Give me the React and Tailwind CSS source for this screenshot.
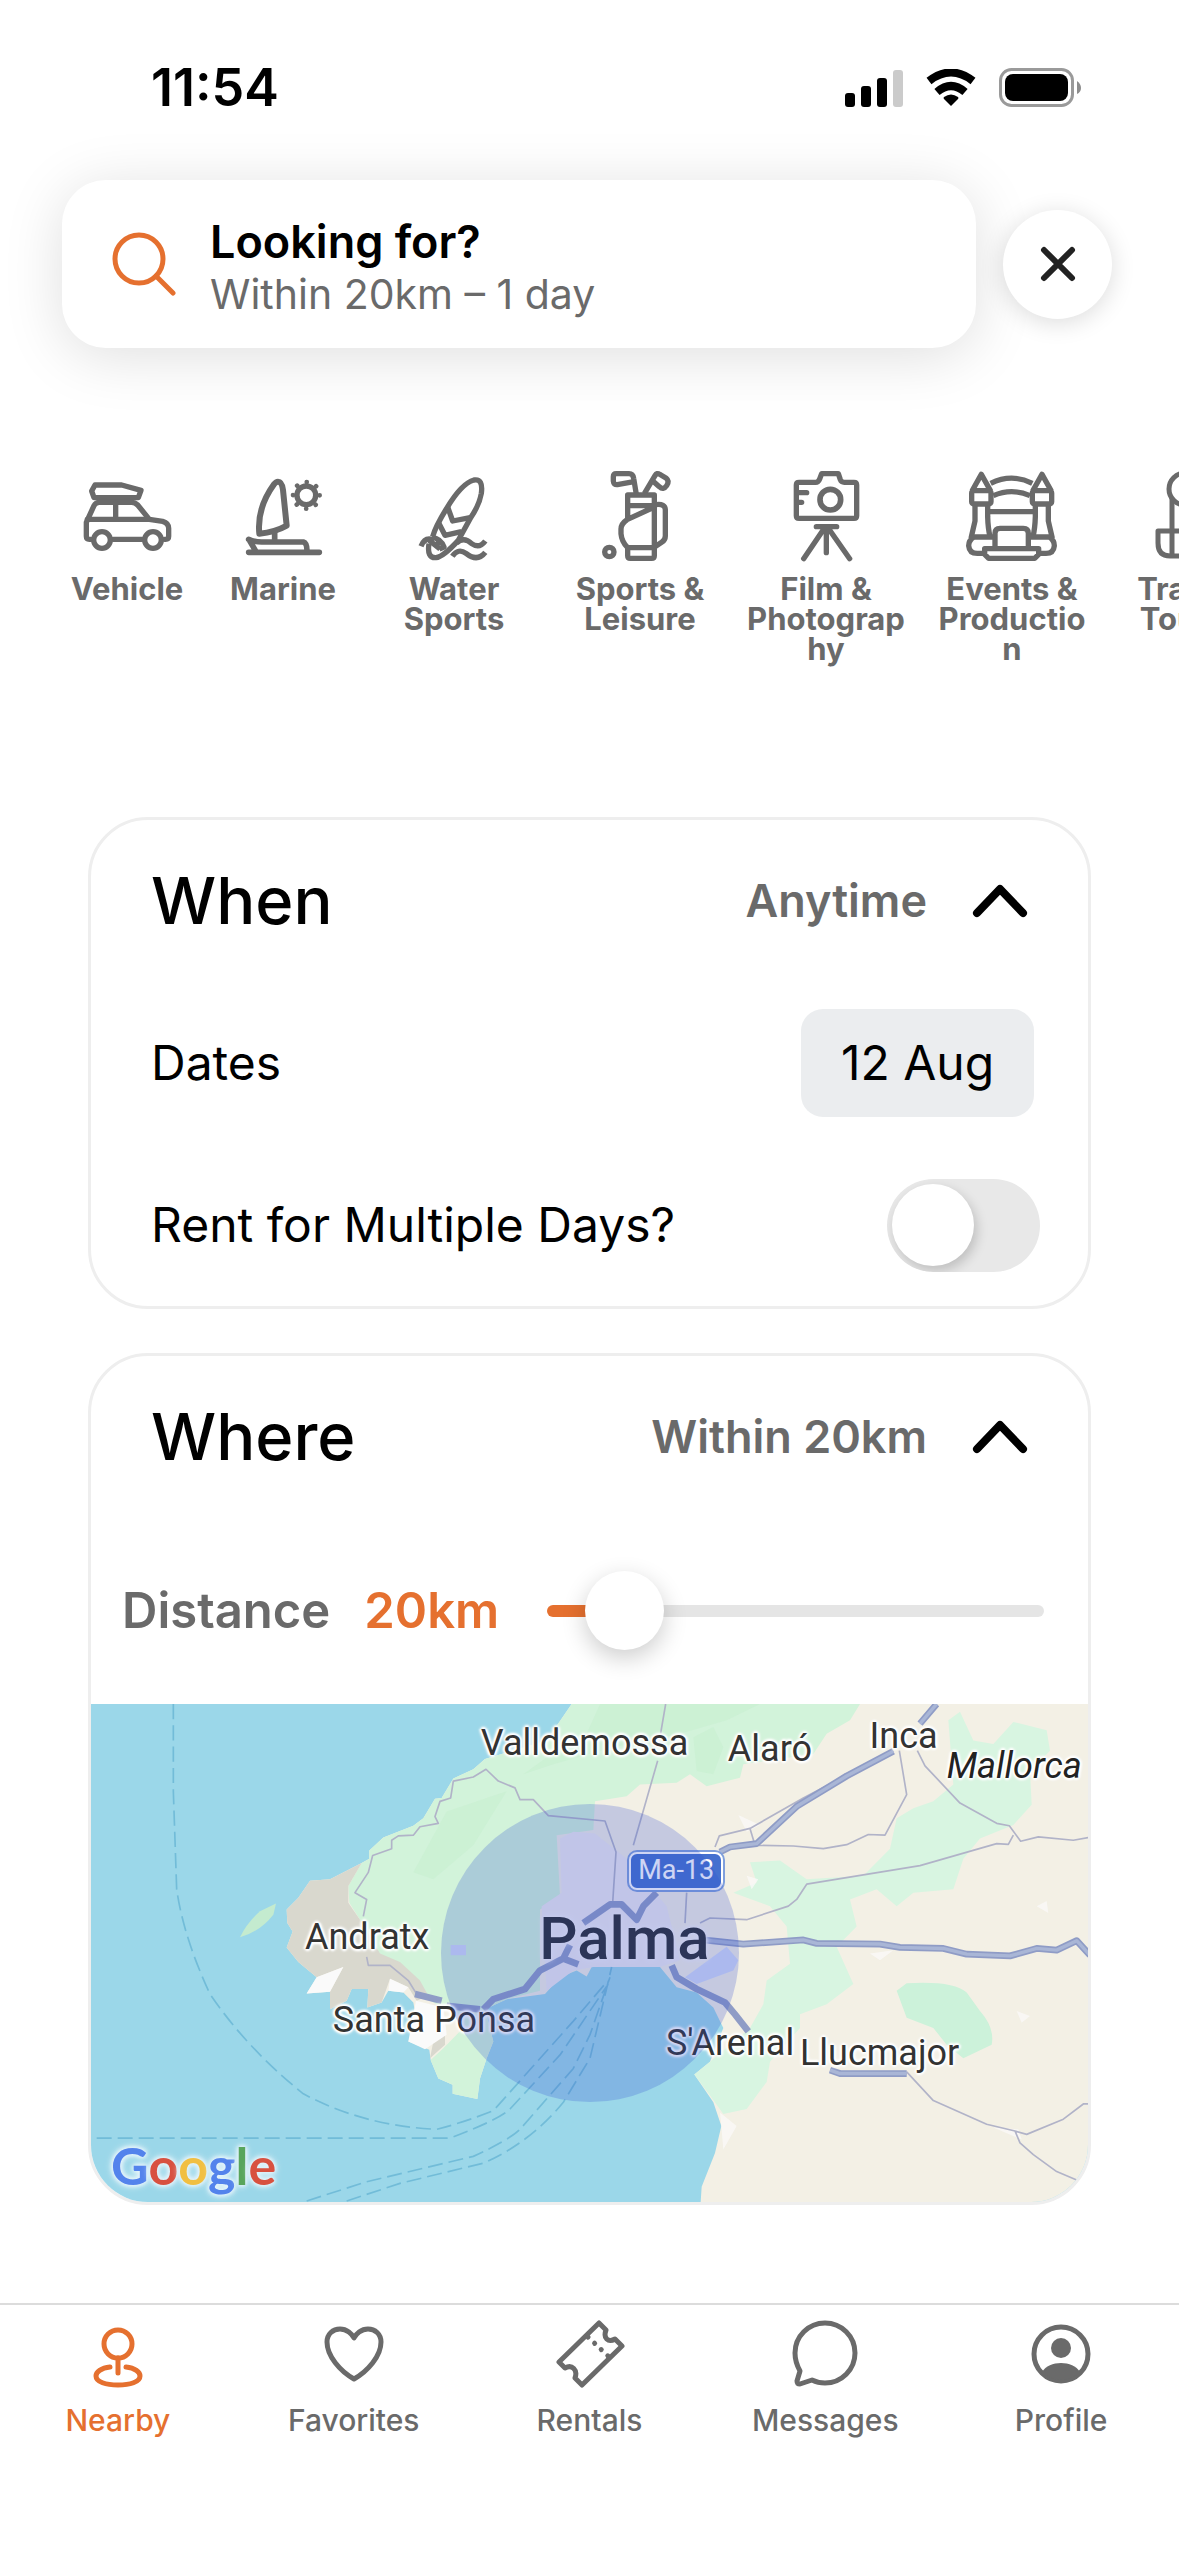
import React, { useState } from 'react';

const VehicleIcon = () => (
  <svg viewBox="27 15 288 288" className="size-24" fill="none" stroke="currentColor" strokeWidth="16" strokeLinecap="round" strokeLinejoin="round">
    <path d="M72 98 65 78 75 60H155L213 76 205 98Z" />
    <path d="M103 100v10M172 100v10" strokeLinecap="butt" />
    <path d="M62 223H58Q49 223 49 214V172L72 122Q77 112 88 112H185Q195 112 203 120L238 163 278 169Q296 174 296 190V214Q296 223 287 223H284" />
    <path d="M52 163H238M137 114V160M130 223H216" />
    <circle cx="96" cy="225" r="25" />
    <circle cx="249" cy="225" r="25" />
  </svg>
);

const MarineIcon = () => (
  <svg viewBox="495 15 288 288" className="size-24" fill="none" stroke="currentColor" strokeWidth="16" strokeLinecap="round" strokeLinejoin="round">
    <path d="M624 50Q636 50 639 75L650 182Q615 202 568 206 560 130 612 58 618 50 624 50Z" strokeWidth="18" />
    <path d="M614 200V228M536 223Q555 232 580 231H700Q711 234 711 258M537 224 558 260M536 262H748" strokeWidth="17" />
    <circle cx="709" cy="91" r="28" />
    <circle cx="709" cy="91" r="40" strokeWidth="14" strokeDasharray="0.1 31.316" />
  </svg>
);

const WaterIcon = () => (
  <svg viewBox="1008 15 288 288" className="size-24" fill="none" stroke="currentColor" strokeWidth="16" strokeLinejoin="round">
    <path d="M1165 226Q1120 275 1098 278 1070 280 1077 236M1088 215Q1096 185 1130 130 1175 55 1212 45 1240 40 1234 85 1228 120 1202 158L1165 226" />
    <path d="M1133 126 1148 168 1204 157M1105 172 1125 211 1174 200" />
    <path d="M1053 244Q1064 216 1088 224M1078 226 1110 252M1086 217Q1112 220 1122 246L1108 252M1096 232 1110 240" />
    <path d="M1160 234Q1182 214 1205 236 1228 252 1246 228M1147 274Q1165 248 1188 265 1222 292 1246 262" />
  </svg>
);

const SportsIcon = () => (
  <svg viewBox="-9 15 288 288" className="size-24" fill="none" stroke="currentColor" strokeWidth="16" strokeLinejoin="round">
    <path d="M124 88 116 40Q114 26 102 26H64Q55 26 55 35V48Q56 60 67 59L117 50" />
    <path d="M148 86 180 32Q186 22 194 28L214 40Q224 48 215 62 205 77 193 65L176 50" />
    <path d="M98 160V90H178V248M98 122H178M178 126 96 164Q78 176 78 192V206Q80 230 98 248H178V272Q178 280 170 280H106Q98 280 98 272V248" />
    <path d="M182 119Q211 115 211 135V213Q211 225 200 232L182 244" />
    <circle cx="43" cy="261" r="14" />
  </svg>
);

const FilmIcon = () => (
  <svg viewBox="549 15 288 288" className="size-24" fill="none" stroke="currentColor" strokeWidth="16" strokeLinecap="round" strokeLinejoin="round">
    <path d="M612 52H662Q670 52 674 42L680 26H730L736 44Q739 52 748 52H777Q785 52 785 60V152Q785 160 777 160H612Q604 160 604 152V60Q604 52 612 52Z" />
    <circle cx="706" cy="104" r="31" strokeWidth="17" />
    <path d="M606 83H635M606 112H620M664 185H725M694 190V263M688 190 626 281M700 190 764 281" />
  </svg>
);

const EventsIcon = () => (
  <svg viewBox="1110 15 288 288" className="size-24" fill="none" stroke="currentColor" strokeWidth="16" strokeLinejoin="round">
    <path d="M1134 78 1162 28 1190 78M1316 78 1344 28 1372 78" />
    <rect x="1133" y="77" width="58" height="40" rx="7" />
    <rect x="1315" y="77" width="58" height="40" rx="7" />
    <path d="M1143 120V168L1131 220M1181 120V155Q1182 190 1188 215M1363 120V168L1375 220M1324 120V155Q1323 190 1317 215" />
    <path d="M1198 216H1140Q1124 226 1124 242 1126 265 1150 265H1168M1308 216H1366Q1381 226 1381 242 1379 265 1356 265H1338" />
    <path d="M1190 55Q1253 24 1315 55M1198 92Q1253 68 1308 92M1188 140H1318" />
    <path d="M1203 248V205Q1203 190 1218 190H1288Q1303 190 1303 205V248" />
    <path d="M1172 251H1334V268L1322 280H1184L1172 268Z" />
  </svg>
);

const TravelIcon = () => (
  <svg viewBox="0 0 96 96" className="size-24" fill="none" stroke="currentColor" strokeWidth="5" strokeLinejoin="round">
    <circle cx="35" cy="19" r="16" />
    <path d="M22 28V86M48 28V86M22 61H8V73Q8 86 20 86H76Q88 86 88 73V61H48M22 61H48" />
  </svg>
);

const categories = [
  { label: 'Vehicle', Icon: VehicleIcon, width: 'w-[132px]' },
  { label: 'Marine', Icon: MarineIcon, width: 'w-[132px]' },
  { label: 'Water Sports', Icon: WaterIcon, width: 'w-[162px]' },
  { label: 'Sports & Leisure', Icon: SportsIcon, width: 'w-[162px]' },
  { label: 'Film & Photography', Icon: FilmIcon, width: 'w-[162px]' },
  { label: 'Events & Production', Icon: EventsIcon, width: 'w-[162px]' },
  { label: 'Travel & Touring', Icon: TravelIcon, width: 'w-[162px]' }
];

const tabs = [
  {
    label: 'Nearby',
    icon: (
      <>
        <circle cx="36" cy="26" r="14" />
        <path d="M36 40V55M28 49C19 50 14 54 14 58 14 64 24 67 36 67S58 64 58 58C58 54 53 50 44 49" />
      </>
    )
  },
  {
    label: 'Favorites',
    icon: <path d="M36 61C22 53 9 38 9 24 9 16 15 11 22 11 29 11 34 16 36 20 38 16 43 11 50 11 57 11 63 16 63 24 63 38 50 53 36 61Z" />
  },
  {
    label: 'Rentals',
    icon: (
      <>
        <path d="M46 5 53 12C50 20 55 25 62 21L69 28 29 67 22 60C25 52 19 46 12 50L6 44Z" />
        <path d="M35 19 55 38" strokeDasharray="0.1 9" />
      </>
    )
  },
  {
    label: 'Messages',
    icon: <path d="M36 65Q29 65 23 62L11 66Q8 66 8 63L11 53Q6 44 6 35A30 30 0 1 1 36 65Z" />
  },
  {
    label: 'Profile',
    icon: (
      <>
        <circle cx="36" cy="36" r="27" />
        <circle cx="36" cy="30" r="10" fill="currentColor" stroke="none" />
        <path d="M17 54C24 42 48 42 55 54A27 27 0 0 1 17 54Z" fill="currentColor" stroke="none" />
      </>
    )
  }
];

// positions are the label centres, in percent of the map
const places = [
  { name: 'Valldemossa', x: 49.5, y: 7.8 },
  { name: 'Alaró', x: 68.1, y: 9 },
  { name: 'Inca', x: 81.5, y: 6.4 },
  { name: 'Andratx', x: 27.7, y: 46.8 },
  { name: 'Santa Ponsa', x: 34.4, y: 63.5 },
  { name: "S'Arenal", x: 64.1, y: 68.1 },
  { name: 'Llucmajor', x: 79.1, y: 70.1 }
];

const halo = '[text-shadow:0_0_2px_#fff,2px_0_2px_#fff,-2px_0_2px_#fff,0_2px_2px_#fff,0_-2px_2px_#fff,0_0_4px_#fff,0_0_5px_#fff]';

const StatusBar = () => (
  <div className="flex h-[60px] items-center justify-between pr-[97px] pl-[151px]">
    <span className="text-[52px] font-semibold">11:54</span>
    <div className="flex items-center gap-[23px]">
      <svg viewBox="0 0 58 38" className="h-[38px] w-[58px]">
        <rect x="0" y="24" width="10" height="14" rx="3" />
        <rect x="16" y="17" width="10" height="21" rx="3" />
        <rect x="32" y="9" width="10" height="29" rx="3" />
        <rect x="48" y="1" width="10" height="37" rx="3" fill="#cbcbcb" />
      </svg>
      <svg viewBox="0 0 50 38" className="h-[38px] w-[50px]">
        <path d="M25 37 18 30Q17 29 18 28Q25 23 32 28Q33 29 32 30Z" />
        <path d="M11 23Q25 11 39 23" fill="none" stroke="#000" strokeWidth="8" />
        <path d="M3 12Q25 -5 47 12" fill="none" stroke="#000" strokeWidth="8" />
      </svg>
      <svg viewBox="0 0 83 40" className="h-10 w-[83px]">
        <rect x="1.5" y="1.5" width="72" height="36" rx="11" fill="none" stroke="#9a9a9a" strokeWidth="3" />
        <rect x="6" y="6" width="63" height="27" rx="8" />
        <path d="M78 13Q82 16 82 20T78 26Z" fill="#8d8d8d" />
      </svg>
    </div>
  </div>
);

const CardHeader = ({ title, value }) => (
  <button type="button" className="flex h-[162px] w-full items-center pr-[58px] pl-[60px] text-left">
    <h2 className="flex-1 text-[65px] font-medium">{title}</h2>
    <span className="text-[45px] font-semibold text-[#6a6a6a]">{value}</span>
    <svg viewBox="0 0 60 40" className="ml-[43px] h-10 w-[60px]" fill="none" stroke="#000" strokeWidth="8" strokeLinecap="round" strokeLinejoin="round">
      <path d="M7 32 30 8 53 32" />
    </svg>
  </button>
);

const RadiusMap = () => (
  <div className="relative h-[498px] overflow-hidden bg-[#9bd7e9] font-['Roboto',sans-serif]">
    <svg viewBox="33 42 2991 1473" preserveAspectRatio="none" className="h-full w-full" fill="none" strokeLinejoin="round">
      <path fill="#f3f0e5" d="M1475 42 1400 150 1215 205 1180 235 1120 262 1085 320 1065 322 1030 380 1000 402 910 437 868 475V500L845 512 750 560 690 565 655 615 620 650 622 690 638 715 620 762 655 805 710 850 680 898 750 893V945L800 920 815 885H865L862 940 905 925 925 890 970 895 1000 925 1010 980 985 1040 1048 1065 1052 1095 1075 1150 1118 1168V1195L1192 1210 1200 1150 1220 1090 1240 1040 1215 945 1280 915 1395 900 1440 850 1490 830 1520 848 1535 820 1680 808 1740 820 1790 880 1850 895 1900 940 1930 1000 1890 1100 1843 1138 1900 1220 1924 1290 1905 1370 1865 1470 1862 1515H3030V42Z" />
      {/* mountains */}
      <path fill="#d2f3da" d="M1475 42 1400 150 1215 205 1180 235 1120 262 1085 320 1065 322 1030 380 1000 402 910 437 868 475V500L845 512 805 580 808 630 840 680 900 790 960 810 1010 860 1050 920 1130 960 1140 1010 1090 1060 1052 1095 1075 1150 1118 1168V1195L1192 1210 1200 1150 1220 1090 1240 1040 1215 945 1280 915 1380 890 1380 650 1440 610 1430 430 1540 415 1545 330 1640 315 1680 280 1790 275 1830 250 1880 285 1980 260 1990 220 2200 190 2240 130 2310 90 2340 42Z" />
      <path fill="#c9efd2" d="M1560 42 1520 130 1400 200 1330 250 1420 220 1600 170 1800 130 1940 90 2040 42ZM1840 140 1900 110 1930 170 1900 250 1850 240ZM1100 360 1280 300 1180 460 1060 560 1000 540Z" opacity=".7" />
      <path fill="#d9d8ce" d="M845 512 750 560 690 565 655 615 620 650 622 690 638 715 620 762 655 805 710 850 790 820 750 893V945L800 920 815 885H865L862 940 905 925 930 855 985 880 1010 920 1045 905 1020 860 960 805 900 780 840 680 805 630V580ZM1050 1090 1095 1050V1020L1060 1040Z" />
      <path fill="#fafafa" d="M710 850 790 820 750 893 680 898ZM930 855 985 880 970 895 925 890ZM1008 920 1090 940 1100 1020 1035 1063 985 1040Z" />
      <path fill="#c4ebcf" d="M480 732Q500 690 540 655L588 632 580 665Q540 715 480 732Z" />
      <path fill="#d8f5e1" d="M2605 90 2640 65 2680 150 2740 160 2800 95 2900 120 2910 180 2850 240 2855 340 2800 400 2700 440 2650 500 2620 590 2500 600 2450 640 2390 590 2310 620 2330 700 2270 760 2320 870 2240 930 2160 960V1000L2070 1100 2060 1160 2000 1240 1930 1255 1890 1200 1843 1138 1890 1100 2010 1000 2050 930 2060 860 2130 810 2120 700 2070 640 1960 600 2030 570 2010 510 2100 505 2180 560 2350 550 2430 470 2450 380 2500 350 2560 330 2620 280Z" />
      <path fill="#ccf2da" d="M2450 890 2480 868Q2620 860 2660 895L2700 950Q2745 1000 2735 1050L2650 1090 2600 1050 2560 1000 2480 970Z" />
      {/* city */}
      <path fill="#eeeaf0" d="M1440 440 1480 420 1545 425 1640 500 1760 640 1800 800 1740 820 1540 820 1480 830 1400 890 1385 640 1445 600Z" />
      <path fill="#d3dbf8" d="M1815 850 1940 760 1975 800 1960 830 1850 870ZM1112 755H1158V785H1112Z" />
      <path fill="#faf9f8" d="M1975 370 2040 400 2000 420ZM2000 550 2035 560 2015 590ZM2870 640 2900 625 2905 660ZM2370 780 2440 770 2400 800ZM2810 950 2850 965 2825 985ZM1920 1250 1970 1290 1930 1360ZM2740 1295 2815 1300 2825 1330Z" opacity=".8" />
      {/* ferry lines */}
      <path stroke="#72bcd8" strokeWidth="5" strokeDasharray="45 18" d="M280 42V300L290 590Q310 730 390 900 500 1060 670 1195 850 1290 1070 1300 1150 1280 1240 1245L1480 980 1575 870M50 1326H1110Q1260 1270 1290 1240L1440 1080 1585 870M680 1512 860 1455 1180 1380Q1290 1330 1320 1300L1480 1120 1530 1020 1590 850M800 1512 960 1460 1210 1400Q1350 1340 1450 1220L1530 1090 1595 820" />
      {/* roads */}
      <path stroke="#b1b3c8" strokeWidth="5" d="M850 670 860 620 825 600 865 540 878 490 935 470V445L955 432 1000 430 1020 405 1075 395 1065 375 1080 330 1112 320 1120 270 1180 258 1218 235 1255 270 1305 290 1320 325H1360L1405 372 1575 388 1608 480 1598 630M860 790 865 815H930L985 860 1010 900M1757 42 1740 140M1733 210 1660 460M1905 465 1918 432 2010 410 2170 320 2440 180M2010 410 2025 460 2140 462 2230 470 2300 458 2365 428 2415 430 2480 310 2458 180M2512 180 2535 225 2640 335 2750 395 2788 402 2822 448 2875 435 2980 445 3030 436M2800 430 2785 457 2750 455 2520 520 2180 575 2150 620 2125 640 2000 680 1890 675 1860 690M1820 600 1815 690M2480 1130 2560 1215 2720 1285 2805 1305 2840 1315 2950 1270 3010 1225H3030M2805 1305 2820 1340 2860 1375 2930 1425 2990 1450" />
      <path stroke="#8f9cc6" strokeWidth="20" d="M2570 42 2520 100M2440 182 2300 255 2150 345 2030 455 1950 465 1920 480M1730 600 1690 640 1670 680 1625 635 1590 635 1510 690M1870 740 1990 752 2170 740 2210 750 2400 752 2460 762 2590 765 2660 782 2790 787 2870 765 2930 770 2990 742 3030 785M1210 945 1240 915 1335 885 1380 830 1450 795 1495 812M1450 795 1470 755M1100 935 1200 945M1775 815 1790 850 1850 885 1935 925 1965 960 2005 1010M2250 1125 2280 1135H2480M1005 900 1085 920" />
      <path stroke="#a9b6d6" strokeWidth="10" d="M2570 42 2520 100M2440 182 2300 255 2150 345 2030 455 1950 465 1920 480M1870 740 1990 752 2170 740 2210 750 2400 752 2460 762 2590 765 2660 782 2790 787 2870 765 2930 770 2990 742 3030 785M2250 1125 2280 1135H2480" />
    </svg>
    {places.map((place) => (
      <span
        key={place.name}
        className={`absolute -translate-x-1/2 -translate-y-1/2 text-[36px] leading-none whitespace-nowrap text-[#333] ${halo}`}
        style={{ left: `${place.x}%`, top: `${place.y}%` }}
      >
        {place.name}
      </span>
    ))}
    <span className={`absolute top-[12.4%] left-[92.6%] -translate-x-1/2 -translate-y-1/2 text-[36px] leading-none text-[#222] italic ${halo}`}>
      Mallorca
    </span>
    <span className="absolute top-[47.2%] left-[53.5%] -translate-x-1/2 -translate-y-1/2 text-[60px] leading-none font-medium text-[#2b2d33] [text-shadow:0_0_3px_#f3f1f6,0_0_5px_#f3f1f6,0_0_7px_#f3f1f6]">
      Palma
    </span>
    <span className="absolute top-[33.5%] left-[58.7%] flex h-[38px] w-[94px] -translate-x-1/2 -translate-y-1/2 items-center justify-center rounded-[8px] border-2 border-white bg-[#4470cf] text-[27px] leading-none text-white ring-2 ring-[#7f9fdc]">
      Ma-13
    </span>
    <div className="absolute top-1/2 left-1/2 size-[298px] -translate-x-1/2 -translate-y-1/2 rounded-full bg-[#334fd3]/24" />
    <span className="absolute bottom-[2px] left-[20px] font-['Lato',sans-serif] text-[52px] leading-[70px] font-bold [text-shadow:0_0_4px_#e3f3fa,0_0_4px_#e3f3fa,0_0_6px_#e3f3fa,0_0_8px_#e3f3fa]">
      <span className="text-[#5383ec]">G</span>
      <span className="text-[#d85140]">o</span>
      <span className="text-[#f1bf42]">o</span>
      <span className="text-[#5383ec]">g</span>
      <span className="text-[#58a55c]">l</span>
      <span className="text-[#d85140]">e</span>
    </span>
  </div>
);

const App = () => {
  const [multipleDays, setMultipleDays] = useState(false);
  const [distance, setDistance] = useState(20);
  const [tab, setTab] = useState('Nearby');

  return (
    <div className="flex min-h-screen flex-col overflow-hidden bg-white pt-[58px] font-['Inter',sans-serif] text-black">
      <StatusBar />

      <header className="mt-[62px] flex items-center gap-[27px] pr-[67px] pl-[62px]">
        <button type="button" className="flex h-[168px] flex-1 items-center rounded-[44px] bg-white pl-[50px] text-left shadow-[0_8px_60px_rgba(0,0,0,0.13)]">
          <svg viewBox="0 0 64 64" className="size-16" fill="none" stroke="#e5702f" strokeWidth="5" strokeLinecap="round">
            <circle cx="27" cy="27" r="24" />
            <path d="M44 44 61 61" />
          </svg>
          <span className="ml-[34px] flex flex-col pt-2 leading-[53px]">
            <span className="text-[45px] font-semibold">Looking for?</span>
            <span className="text-[41px] text-[#6a6a6a]">Within {distance}km – 1 day</span>
          </span>
        </button>
        <button type="button" aria-label="Close" className="flex size-[109px] items-center justify-center rounded-full bg-white shadow-[0_4px_24px_rgba(0,0,0,0.14)]">
          <svg viewBox="0 0 36 36" className="size-9" stroke="#222" strokeWidth="6" strokeLinecap="round">
            <path d="M4 4 32 32M32 4 4 32" />
          </svg>
        </button>
      </header>

      <nav className="mt-[122px] flex h-[194px] items-start gap-6 pl-[61px]">
        {categories.map(({ label, Icon, width }) => (
          <button key={label} type="button" className={`flex shrink-0 flex-col items-center gap-2 text-[#6a6a6a] ${width}`}>
            <Icon />
            <span className="w-full text-center text-[31px] leading-[30px] font-bold break-words">{label}</span>
          </button>
        ))}
      </nav>

      <main className="mt-[153px] flex flex-col gap-11 px-[88px]">
        <section className="rounded-[60px] border-3 border-[#eee]">
          <CardHeader title="When" value="Anytime" />
          <div className="flex h-[162px] items-center justify-between pr-[54px] pl-[60px] text-[48px]">
            <span>Dates</span>
            <button type="button" className="h-[108px] w-[233px] rounded-[22px] bg-[#ebedef]">12 Aug</button>
          </div>
          <label className="flex h-[162px] items-center justify-between pr-[48px] pl-[60px] text-[48px]">
            Rent for Multiple Days?
            <input
              type="checkbox"
              checked={multipleDays}
              onChange={(e) => setMultipleDays(e.target.checked)}
              className="flex h-[93px] w-[153px] appearance-none items-center overflow-hidden rounded-full bg-[#e8e8e8] px-[5px] before:size-[82px] before:rounded-full before:bg-white before:shadow-[3px_5px_12px_rgba(0,0,0,0.18)] checked:justify-end checked:bg-[#e5702f]"
            />
          </label>
        </section>

        <section className="overflow-hidden rounded-[60px] border-3 border-[#eee]">
          <CardHeader title="Where" value={`Within ${distance}km`} />
          <div className="flex h-[186px] items-center pr-[44px] pl-[31px] text-[49px] font-semibold">
            <label htmlFor="distance" className="text-[#6a6a6a]">Distance</label>
            <span className="ml-[34px] text-[#e5702f]">{distance}km</span>
            <input
              id="distance"
              type="range"
              min="2"
              max="200"
              value={distance}
              onChange={(e) => setDistance(Number(e.target.value))}
              style={{ '--fill': `${((distance - 2) / 198) * 100}%` }}
              className="ml-12 h-20 min-w-0 flex-1 appearance-none bg-transparent [&::-webkit-slider-runnable-track]:h-3 [&::-webkit-slider-runnable-track]:rounded-full [&::-webkit-slider-runnable-track]:bg-[linear-gradient(to_right,#e5702f_var(--fill),#e5e5e5_var(--fill))] [&::-webkit-slider-thumb]:-mt-[34px] [&::-webkit-slider-thumb]:size-[79px] [&::-webkit-slider-thumb]:appearance-none [&::-webkit-slider-thumb]:rounded-full [&::-webkit-slider-thumb]:bg-white [&::-webkit-slider-thumb]:shadow-[0_8px_24px_rgba(0,0,0,0.2)]"
            />
          </div>
          <RadiusMap />
        </section>
      </main>

      <footer className="mt-auto flex h-[253px] border-t-2 border-[#dcdcdc] pt-[13px]">
        {tabs.map(({ label, icon }) => (
          <button
            key={label}
            type="button"
            onClick={() => setTab(label)}
            className={`flex flex-1 flex-col items-center gap-[10px] ${tab === label ? 'text-[#e5702f]' : 'text-[#6a6a6a]'}`}
          >
            <svg viewBox="0 0 72 72" className="size-[72px]" fill="none" stroke="currentColor" strokeWidth="5" strokeLinecap="round" strokeLinejoin="round">
              {icon}
            </svg>
            <span className="text-[30px] leading-10 font-medium">{label}</span>
          </button>
        ))}
      </footer>
    </div>
  );
};

export default App;
